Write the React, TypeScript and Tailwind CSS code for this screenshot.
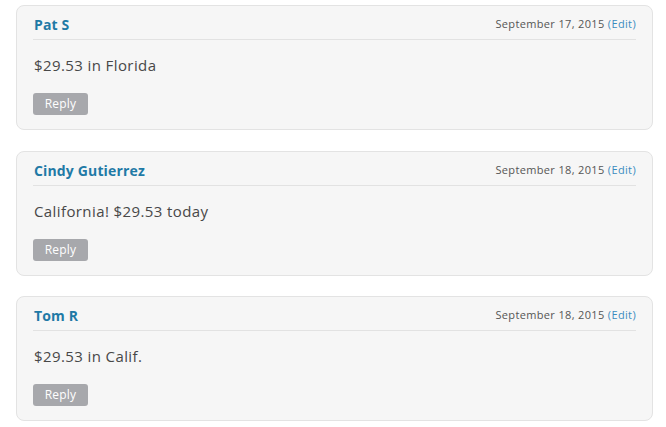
import React from "react";

const comments = [
  { name: "Pat S", date: "September 17, 2015", body: "$29.53 in Florida" },
  { name: "Cindy Gutierrez", date: "September 18, 2015", body: "California! $29.53 today" },
  { name: "Tom R", date: "September 18, 2015", body: "$29.53 in Calif." },
];

export default function App() {
  return (
    <div
      className="w-[666px] h-[427px] bg-white pt-[5px] pl-[16px] overflow-hidden"
      style={{ fontFamily: '"Open Sans", "Liberation Sans", sans-serif' }}
    >
      <div className="flex flex-col gap-[21px] w-[637px]">
        {comments.map((c, i) => (
          <div
            key={c.name}
            className={`h-[125px] rounded-[8px] border border-[#e3e3e3] bg-[#f6f6f6] px-[16px] ${i === 2 ? "-mt-[1px]" : ""}`}
          >
            <div className="flex items-start justify-between border-b border-[#e2e2e2] pt-[9px] pb-[4px] pl-[1px]">
              <span className="text-[14px] leading-[20px] font-bold text-[#1f7aa6] tracking-[0.15px]">{c.name}</span>
              <span className="text-[11px] leading-[16px] text-[#555555] mt-[1px] tracking-[0.35px]">
                {c.date} <span className="text-[#3a8cbf]">(Edit)</span>
              </span>
            </div>
            <div className="mt-[13px] text-[15px] leading-[24px] text-[#484848] pl-[1px] tracking-[0.4px]">{c.body}</div>
            <button className="mt-[16px] w-[55px] h-[22px] rounded-[3px] bg-[#a7a8ac] text-white text-[12px] leading-[22px] tracking-[0.2px]">
              Reply
            </button>
          </div>
        ))}
      </div>
    </div>
  );
}
